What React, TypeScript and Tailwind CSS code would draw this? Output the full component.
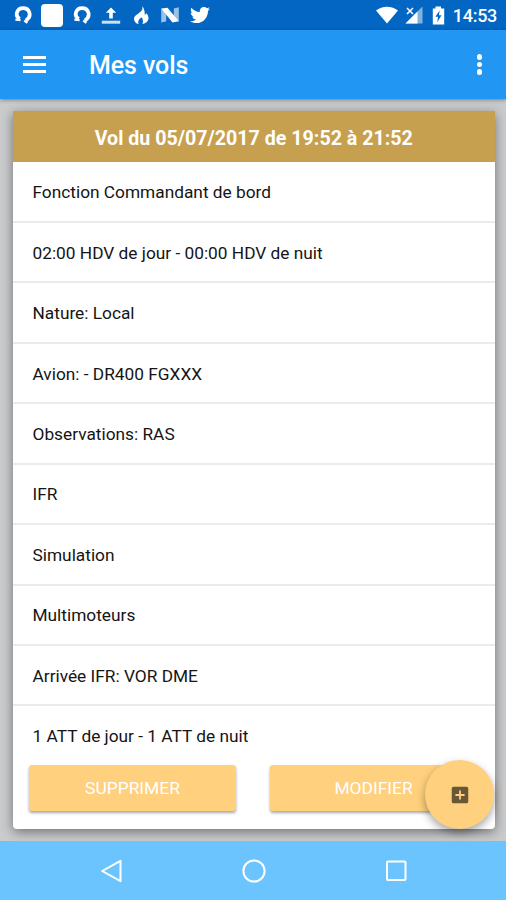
import React from "react";
import { FaTwitter } from "react-icons/fa";
import { MdAddBox } from "react-icons/md";

const rows: string[] = [
  "Fonction Commandant de bord",
  "02:00 HDV de jour - 00:00 HDV de nuit",
  "Nature: Local",
  "Avion: - DR400 FGXXX",
  "Observations: RAS",
  "IFR",
  "Simulation",
  "Multimoteurs",
  "Arrivée IFR: VOR DME",
];

function Horseshoe() {
  return (
    <svg className="h-5 w-5 shrink-0" viewBox="0 0 20 20" fill="none" stroke="#fff">
      <path d="M6.800 13.800C4 12.300 3.200 9.700 4.100 7.200 5 4.700 7.300 3.200 10 3.200s5.500 1.700 6.300 4.200c1 3-.3 6.200-3.500 8.200" strokeWidth="3.700" />
      <path d="M2.400 14.600l5.200 .6M11.200 15.600l3.200 2.200" strokeWidth="2.200" />
    </svg>
  );
}

function StatusBar() {
  return (
    <header className="flex h-[30px] shrink-0 items-center bg-[#0366c2] pr-[9px] pl-[13px] text-white">
      <div className="flex h-[30px] items-center gap-[9.5px]">
        <Horseshoe />
        <span className="-ml-[1.5px] h-[23px] w-[22px] rounded-[4px] bg-white" />
        <span className="-ml-[0.5px] flex"><Horseshoe /></span>
        <svg className="-ml-[0.5px] h-5 w-5" viewBox="0 0 20 20" fill="#fff">
          <path d="M10 2.500l5.200 5.300h-3.400v5.700H8.200V7.800H4.800z" />
          <path d="M.8 15.700h18.400v3H.8z" opacity=".8" />
        </svg>
        <svg className="h-5 w-5" viewBox="0 0 20 20" fill="#fff">
          <path fillRule="evenodd" d="M11.300 1.200c.4 2.500-.2 4-1.800 5.600C7 9.200 3 10.500 3 14c0 2.400 1.900 4.700 4.700 5.100-1.300-2.700.2-4.700 2.800-6.800 1.100 1.600 2.200 3.800 1 6.700 3.300-.4 6-2.600 6-6 0-2-1-3.500-2-4.800l-1.700 1.700C13.900 6.700 13.200 3.200 11.300 1.200z" />
        </svg>
        <svg className="h-5 w-5" viewBox="0 0 20 20" fill="#fff">
          <path d="M1.200 3.500l5 4v9l-5 1zM13.800 3.500l5-1.300v14.500l-5-4z" opacity=".6" />
          <path d="M1.200 3.500l6.300-.8 11.300 13.500-6.300 1.200z" />
        </svg>
        <FaTwitter className="ml-[0.5px] h-5 w-5" />
      </div>
      <div className="ml-auto flex h-[30px] items-center">
        <svg className="h-[18px] w-[22px]" viewBox="0 0 22 18" fill="#fff">
          <path d="M0 4.500C6-.6 16-.6 22 4.500L11 17.600z" />
        </svg>
        <svg className="ml-[7px] h-[18px] w-[18px]" viewBox="0 0 18 18">
          <path d="M17.500.5V17.500H.5z" fill="#fff" opacity=".5" />
          <path d="M12.500 5.500V17.500H.5z" fill="#fff" />
          <path d="M2 2l6 6M8 2L2 8" stroke="#0366c2" strokeWidth="3.500" />
          <path d="M2 2l6 6M8 2L2 8" stroke="#fff" strokeWidth="1.600" />
        </svg>
        <svg className="ml-[9px] h-[19px] w-[13px]" viewBox="0 0 13 19" fill="#fff">
          <path d="M3.500 .5h5.500v2h3.200v16H.8v-16h2.700z" />
          <path d="M7.600 4.500L3.400 10.700h2.700l-.9 5.500 4.300-7H6.900z" fill="#0366c2" />
        </svg>
        <span className="ml-[8px] pt-[2px] text-[18px] leading-[28px] font-medium tracking-[-0.3px]">14:53</span>
      </div>
    </header>
  );
}

function AppBar() {
  return (
    <div className="z-10 flex h-[69px] shrink-0 items-center bg-[#2196f3] pr-[24px] pl-[23px] text-white shadow-[0_1px_4px_rgba(0,0,0,0.4)]">
      <button aria-label="Menu" className="flex w-[23px] flex-col gap-[4px]">
        <span className="h-[3px] w-full bg-white" />
        <span className="h-[3px] w-full bg-white" />
        <span className="h-[3px] w-full bg-white" />
      </button>
      <h1 className="ml-[43px] pt-[3px] text-[25px] leading-[30px] font-medium tracking-[-0.1px]">Mes vols</h1>
      <div className="ml-auto flex flex-col gap-[2px]">
        <span className="h-[5.500px] w-[5.500px] rounded-full bg-white" />
        <span className="h-[5.500px] w-[5.500px] rounded-full bg-white" />
        <span className="h-[5.500px] w-[5.500px] rounded-full bg-white" />
      </div>
    </div>
  );
}

const button =
  "flex h-[46px] w-[207px] items-center justify-center rounded-[3px] bg-[#ffd07d] pt-[1px] text-[17.4px] text-white shadow-[0_2px_3px_rgba(0,0,0,0.35)]";

export default function App() {
  return (
    <div className="flex h-[900px] w-[506px] flex-col overflow-hidden bg-[#cacbcc] font-[Roboto,sans-serif] text-[#151515]">
      <StatusBar />
      <AppBar />
      <main className="flex h-[742px] shrink-0 flex-col pt-[12px] pl-[13px]">
        <section className="relative flex h-[718px] w-[481.5px] flex-col rounded-b-[4px] bg-white shadow-[0_3px_12px_rgba(0,0,0,0.45)]">
          <h2 className="mb-[0.5px] flex h-[51px] shrink-0 items-center justify-center bg-[#c7a04f] pt-[4px] text-[19.65px] font-bold text-white">
            Vol du 05/07/2017 de 19:52 à 21:52
          </h2>
          {rows.map((row) => (
            <div key={row} className="flex h-[60.450px] shrink-0 items-center border-b-2 border-[#ebebeb] pt-[3px] pl-[19.5px] text-[17.3px]">
              {row}
            </div>
          ))}
          <div className="flex h-[58.5px] shrink-0 items-center pt-[3px] pl-[19.5px] text-[17.3px]">1 ATT de jour - 1 ATT de nuit</div>
          <div className="flex gap-[34px] pl-[16px]">
            <button className={button}>SUPPRIMER</button>
            <button className={button}>MODIFIER</button>
          </div>
          <button className="absolute right-[0.5px] bottom-0 flex h-[69px] w-[69px] items-center justify-center rounded-full bg-[#ffd07d] shadow-[0_4px_8px_rgba(0,0,0,0.35)]">
            <MdAddBox className="h-[22px] w-[22px] text-[#695837]" />
          </button>
        </section>
      </main>
      <nav className="z-10 flex h-[59px] shrink-0 items-center bg-[#6cc4ff] pl-[99.5px]">
        <svg className="h-6 w-6" viewBox="0 0 24 24" fill="none" stroke="#fff" strokeWidth="2" strokeLinejoin="round">
          <path d="M20.500 1.800v20.400L2.200 12z" />
        </svg>
        <svg className="ml-[118px] h-6 w-6" viewBox="0 0 24 24" fill="none" stroke="#fff" strokeWidth="2">
          <circle cx="12" cy="12" r="10.600" />
        </svg>
        <svg className="ml-[118px] h-6 w-6" viewBox="0 0 24 24" fill="none" stroke="#fff" strokeWidth="2">
          <rect x="3" y="2.500" width="18.500" height="18.500" rx="1" />
        </svg>
      </nav>
    </div>
  );
}
